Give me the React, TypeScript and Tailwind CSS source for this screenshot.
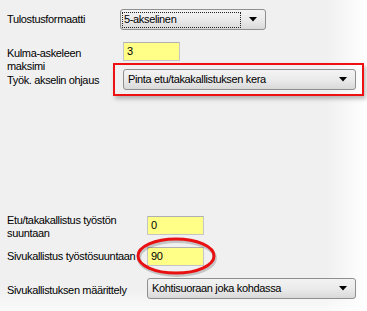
function Caret() {
  return (
    <svg width="8" height="5" viewBox="0 0 8 5" className="shrink-0">
      <path d="M0 0h8L4 4.5z" fill="#000" />
    </svg>
  );
}

function Combo({ value, focused = false, className = "" }: { value: string; focused?: boolean; className?: string }) {
  return (
    <div
      className={`flex h-[21px] items-center rounded-[3px] border border-[#8e8f8f] bg-gradient-to-b from-[#f3f3f3] via-[#ebebeb] to-[#d9d9d9] pr-[8px] ${className}`}
    >
      {focused ? (
        <div className="ml-[1px] flex h-[16px] flex-1 items-center border border-dotted border-[#222] pl-[1px]">
          {value}
        </div>
      ) : (
        <div className="flex-1 pl-[4px]">{value}</div>
      )}
      <div className="ml-[8px]">
        <Caret />
      </div>
    </div>
  );
}

function YellowInput({ value }: { value: string }) {
  return (
    <div className="flex h-[19px] w-[57px] items-center border border-[#c5c5c5] border-t-[#b0b0b0] bg-[#ffff88] pl-[3px]">
      {value}
    </div>
  );
}

export default function App() {
  return (
    <div
      className="relative h-[311px] w-[367px] overflow-hidden bg-[linear-gradient(to_bottom,transparent_93%,rgba(255,255,255,0.75)),linear-gradient(to_right,#f0f0f0_89%,#ffffff)] text-[11px] leading-[13px] tracking-[-0.35px] text-black"
      style={{ fontFamily: '"Liberation Sans", Arial, sans-serif' }}
    >
      <div className="flex flex-col pt-[9px]">
        {/* Tulostusformaatti */}
        <div className="flex h-[21px] items-center">
          <div className="w-[120px] pl-[7px]">Tulostusformaatti</div>
          <Combo value="5-akselinen" focused className="w-[146px]" />
        </div>

        {/* Kulma-askeleen maksimi */}
        <div className="mt-[12px] flex h-[21px] items-start">
          <div className="mt-[5px] w-[123px] pl-[7px]">
            Kulma-askeleen
            <br />
            maksimi
          </div>
          <YellowInput value="3" />
        </div>

        {/* Työk. akselin ohjaus */}
        <div className="flex h-[32px] items-center">
          <div className="mt-[2px] w-[113px] pl-[7px]">Työk. akselin ohjaus</div>
          <div className="w-[251px] border-2 border-[#ee1111] pb-[4px] pl-[8px] pr-[6px] pt-[4px] shadow-[2px_3px_4px_rgba(0,0,0,0.25)]">
            <Combo value="Pinta etu/takakallistuksen kera" className="h-[20px]" />
          </div>
        </div>

        {/* Etu/takakallistus */}
        <div className="mt-[121px] flex h-[19px] items-start">
          <div className="-mt-[2px] w-[147px] pl-[7px]">
            Etu/takakallistus työstön
            <br />
            suuntaan
          </div>
          <YellowInput value="0" />
        </div>

        {/* Sivukallistus työstösuuntaan */}
        <div className="relative mt-[12px] flex h-[19px] items-center">
          <div className="w-[147px] whitespace-nowrap pl-[7px]">Sivukallistus työstösuuntaan</div>
          <YellowInput value="90" />
          <svg
            className="pointer-events-none absolute left-[135px] top-[-12px]"
            width="84"
            height="44"
            viewBox="0 0 84 44"
          >
            <ellipse cx="42" cy="23" rx="38" ry="17" fill="none" stroke="rgba(0,0,0,0.18)" strokeWidth="4" />
            <ellipse cx="41" cy="21" rx="38" ry="17" fill="none" stroke="#e81010" strokeWidth="3" />
          </svg>
        </div>

        {/* Sivukallistuksen määrittely */}
        <div className="mt-[12px] flex h-[21px] items-center">
          <div className="mt-[4px] w-[147px] pl-[7px]">Sivukallistuksen määrittely</div>
          <Combo value="Kohtisuoraan joka kohdassa" className="w-[209px]" />
        </div>
      </div>
    </div>
  );
}
